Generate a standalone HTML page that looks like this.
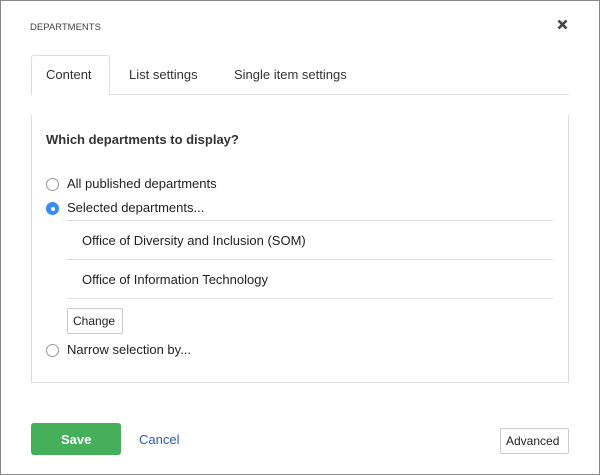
<!DOCTYPE html>
<html><head><style>
*{box-sizing:border-box;margin:0;padding:0}
body{width:600px;height:475px;background:#fff;font-family:"Liberation Sans",sans-serif;color:#222;position:relative;overflow:hidden}
.a{position:absolute}
.radio{position:absolute;width:13px;height:13px;border:1px solid #999;border-radius:50%;background:#fff}
.t{position:absolute;font-size:13px;white-space:nowrap}
</style></head><body>
<div class="a" style="left:0;top:0;width:600px;height:475px;border:1px solid #888"></div>
<div class="t" style="left:30px;top:22px;font-size:9.5px;color:#444">DEPARTMENTS</div>
<svg class="a" style="left:557px;top:19px" width="11" height="11" viewBox="0 0 11 11"><path d="M1.5 1.5L9.5 9.5M9.5 1.5L1.5 9.5" stroke="#444" stroke-width="2.6"/></svg>
<div class="a" style="left:31px;top:94px;width:538px;border-top:1px solid #ddd"></div>
<div class="a" style="left:31px;top:55px;width:79px;height:40px;border:1px solid #ddd;border-bottom:none;border-radius:3px 3px 0 0;background:#fff"></div>
<div class="t" style="left:46px;top:67px;color:#333">Content</div>
<div class="t" style="left:129px;top:67px;color:#333">List settings</div>
<div class="t" style="left:234px;top:67px;color:#333">Single item settings</div>
<div class="a" style="left:31px;top:115px;width:538px;height:268px;border:1px solid #ddd;border-top:none"></div>
<div class="t" style="left:46px;top:132px;font-weight:bold;color:#333">Which departments to display?</div>
<div class="radio" style="left:46px;top:178px"></div>
<div class="t" style="left:67px;top:176px">All published departments</div>
<div class="radio" style="left:46px;top:202px;background:#3b8cf0;border-color:#3b8cf0"><div class="a" style="left:3.5px;top:3.5px;width:4px;height:4px;border-radius:50%;background:#fff"></div></div>
<div class="t" style="left:67px;top:200px">Selected departments...</div>
<div class="a" style="left:67px;top:220px;width:486px;border-top:1px solid #ddd"></div>
<div class="t" style="left:82px;top:233px">Office of Diversity and Inclusion (SOM)</div>
<div class="a" style="left:67px;top:259px;width:486px;border-top:1px solid #ddd"></div>
<div class="t" style="left:82px;top:272px">Office of Information Technology</div>
<div class="a" style="left:67px;top:298px;width:486px;border-top:1px solid #ddd"></div>
<div class="a" style="left:67px;top:308px;width:56px;height:26px;border:1px solid #ccc;border-radius:2px"></div>
<div class="t" style="left:73px;top:314px;font-size:12px">Change</div>
<div class="radio" style="left:46px;top:344px"></div>
<div class="t" style="left:67px;top:342px">Narrow selection by...</div>
<div class="a" style="left:31px;top:423px;width:90px;height:32px;background:#45af5a;border-radius:3px"></div>
<div class="t" style="left:61px;top:432px;color:#fff;font-weight:bold">Save</div>
<div class="t" style="left:139px;top:432px;color:#2a5db0">Cancel</div>
<div class="a" style="left:500px;top:428px;width:69px;height:26px;border:1px solid #ccc;border-radius:2px"></div>
<div class="t" style="left:506px;top:434px;font-size:12px">Advanced</div>
</body></html>
